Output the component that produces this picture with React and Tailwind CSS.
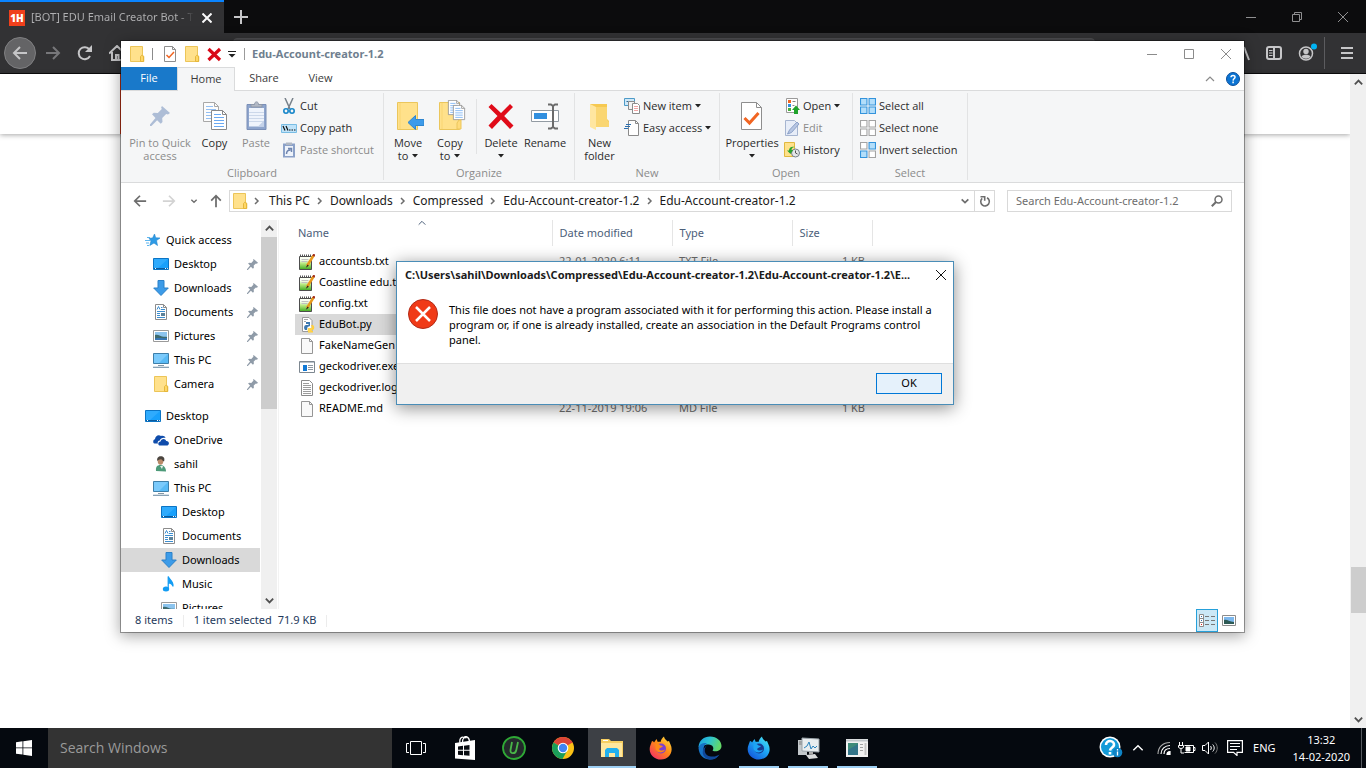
import React, { useState } from "react";
import clsx from "clsx";

/* ---------- small icons ---------- */

const Folder = ({ className = "h-4 w-4" }) => (
  <svg viewBox="0 0 16 16" className={className}>
    <path d="M1.500.5h12v9l1.300 .8v5.200H1.500z" fill="#ffe18c" stroke="#ecc558" />
    <path d="M11.500 15.500V10.500l1.200-1.200 1.800 1v5.200z" fill="#ffd766" stroke="#e5b73b" />
  </svg>
);

const Chevron = ({ dir = "down", className = "h-3 w-3", width = 2 }) => {
  const paths = {
    down: "M2 4l4 4 4-4",
    up: "M2 8l4-4 4 4",
    right: "M4 3l3 3-3 3",
  };
  return (
    <svg viewBox="0 0 12 12" className={className} fill="none" stroke="currentColor" strokeWidth={width}>
      <path d={paths[dir]} />
    </svg>
  );
};

const Caret = () => (
  <svg viewBox="0 0 6 4" className="inline-block h-1 w-[6px] shrink-0 align-middle" fill="#222">
    <path d="M0 0h6L3 3.500z" />
  </svg>
);

const Arrow = ({ className, dir = "left" }) => (
  <svg viewBox="0 0 16 16" className={className} fill="none" stroke="currentColor" strokeWidth="2">
    {dir === "left" && <path d="M15 8H2M8 2L2 8l6 6" />}
    {dir === "right" && <path d="M1 8h13M8 2l6 6-6 6" />}
    {dir === "up" && <path d="M8 15V2M2.500 7.500L8 2l5.500 5.500" />}
  </svg>
);

const Pin = ({ className = "h-3 w-3", fill = "#8f9ba8" }) => (
  <svg viewBox="0 0 20 20" className={className} fill={fill}>
    <path d="M12 0l8 7-2 1.500-1.800-.5-4 4 .3 4-1.700 1.800-3.700-3.500L1.500 20 0 20v-1.500L5.500 12 2 8.300 3.800 6.800l4 .3 4-4.200-.7-1.500z" />
  </svg>
);

const Monitor = () => (
  <svg viewBox="0 0 16 16" className="h-4 w-4">
    <path d="M0.500 2.500h15v11h-15z" fill="#18a0fb" stroke="#0b74c4" />
    <path d="M1 3h14L4 13H1z" fill="#45b6ff" opacity=".5" />
    <path d="M1 12.500h14" stroke="#0b5a9c" />
    <path d="M2 12.500h1M12 12.500h1M14 12.500h.8" stroke="#fff" />
  </svg>
);

const DownArrow = () => (
  <svg viewBox="0 0 16 16" className="h-4 w-4">
    <path d="M5 .5h6v7.500h4.300L8 15.500.7 8H5z" fill="#3c9be8" stroke="#2b80c8" />
  </svg>
);

const DocIcon = () => (
  <svg viewBox="0 0 16 16" className="h-4 w-4">
    <path d="M2.500.5h8l3 3v12h-11z" fill="#fff" stroke="#8c8c8c" />
    <path d="M10.500.5v3h3" fill="none" stroke="#8c8c8c" />
    <path d="M4 5.500l1.500-3 1.500 3M8 3.500h1.500M8 5.500h4M4 7.500h8M4 9.500h3M4 11.500h3M4 13.500h8" fill="none" stroke="#3c8ed0" />
    <path d="M8 9h4v3H8z" fill="#5d8299" />
  </svg>
);

const Picture = () => (
  <svg viewBox="0 0 16 16" className="h-4 w-4">
    <path d="M.5 2.500h15v11H.5z" fill="#fff" stroke="#9a9a9a" />
    <path d="M2 4h12v8H2z" fill="#8cc4ee" />
    <path d="M2 7c3-1 5 1 7 1.500 2 .5 4 .2 5 .5v3H2z" fill="#3d6a6d" />
    <path d="M2 10.500c4-1 8 0 12-.5v2H2z" fill="#3776b5" />
  </svg>
);

const ThisPC = () => (
  <svg viewBox="0 0 16 16" className="h-4 w-4">
    <path d="M.5 1.500h15v10H.5z" fill="#59baf5" stroke="#3e7fa9" />
    <path d="M1 2h14L6 11H1z" fill="#92d5ff" opacity=".6" />
    <path d="M5 13.500h6" stroke="#8497a4" />
    <path d="M0 15.300h16" stroke="#7b98ad" strokeWidth="1.200" />
  </svg>
);

const QuickStar = () => (
  <svg viewBox="0 0 16 16" className="h-4 w-4">
    <path d="M9.500 2l1.200 3.800 4.300.2-3.500 2.600 1 4.900-3.500-2.500L4.800 13.500l1.200-4.500L4 6.300l3.600-.3z" fill="#2e9be6" stroke="#2184cc" strokeWidth=".6" />
    <path d="M2 5.500h3M0 8.500h5M1 11h3M2 13.500h2" stroke="#5db5ee" />
  </svg>
);

const OneDrive = () => (
  <svg viewBox="0 0 16 16" className="h-4 w-4" fill="#0f4cab">
    <path d="M1.500 11.500C-.5 11 0 7.500 2 7.300 2 4 5.500 2 8 4c1.500-.7 4-.2 4.500 2-3-.7-5 .5-5.700 2.500C4.500 8.800 4.300 11 5 11.500z" />
    <path d="M6.500 13.500c-2-.6-1.500-3.800 1-4C8 6.300 12.500 6 13.200 9c2.800-.2 3.800 3.300 1.300 4.500z" />
  </svg>
);

const Person = () => (
  <svg viewBox="0 0 16 16" className="h-4 w-4">
    <path d="M3 15c-.5-4 1-6 4.500-6S13 12 13 15.500z" fill="#4d9a79" />
    <path d="M7 10l2 3 1-3z" fill="#e8f2ee" />
    <ellipse cx="7.500" cy="5" rx="2.800" ry="3.800" fill="#b98a69" />
    <path d="M4.300 5C3.500 1.500 6 0 8 .3c3 0 4 2.500 3 5.200C9.500 5 9 3.300 8 3.300 6 3.300 5.500 4 4.300 5z" fill="#4b4540" />
  </svg>
);

const Music = () => (
  <svg viewBox="0 0 16 16" className="h-4 w-4">
    <ellipse cx="5" cy="13" rx="3.200" ry="2.500" fill="#129cf3" />
    <path d="M7.200 13V.5C8 4 12.500 4.500 12 10.500 11.500 8 10 7 7.500 6.800" fill="#129cf3" stroke="#129cf3" strokeWidth="1.200" />
  </svg>
);

const Notepad = () => (
  <svg viewBox="0 0 16 16" className="h-4 w-4">
    <defs>
      <linearGradient id="note" x1="0" y1="0" x2="0" y2="1">
        <stop offset=".25" stopColor="#fafff2" />
        <stop offset=".55" stopColor="#b4e67c" />
        <stop offset="1" stopColor="#3fab1f" />
      </linearGradient>
    </defs>
    <path d="M.5 2.500h12v13h-12z" fill="url(#note)" stroke="#4d4d4d" />
    <path d="M1 1.500h12" stroke="#555" strokeDasharray="1 1" strokeWidth="2" />
    <path d="M2.500 5.500h7M2.500 7.500h6" stroke="#c2c2c2" />
    <path d="M14.500 1.500L8 12" stroke="#e8991c" strokeWidth="2.500" />
    <path d="M15.500.2l-1.200 2" stroke="#a32f1e" strokeWidth="2.500" />
    <path d="M8.500 10.500L6.800 13.800l3-2z" fill="#222" />
  </svg>
);

const BlankFile = () => (
  <svg viewBox="0 0 16 16" className="h-4 w-4">
    <path d="M2.500.5h8l3 3v12h-11z" fill="#f9f9f9" stroke="#969696" />
    <path d="M10.500.5v3h3" fill="none" stroke="#969696" />
  </svg>
);

const LogFile = () => (
  <svg viewBox="0 0 16 16" className="h-4 w-4">
    <path d="M2.500.5h8l3 3v12h-11z" fill="#fff" stroke="#8a8a8a" />
    <path d="M4 3.500h6M4 5.500h8M4 7.500h8M4 9.500h8M4 11.500h8M4 13.500h8" stroke="#9c9c9c" />
  </svg>
);

const Python = () => (
  <svg viewBox="0 0 16 16" className="h-4 w-4">
    <path d="M3.500.5h6.500l3 3v11h-9.500z" fill="#fff" stroke="#9a9a9a" />
    <path d="M5 2.500h4M5 4.500h2" stroke="#a8a8a8" />
    <path d="M7 5h4v4L8.500 10 8 13H6c-1.500-1.500-1-5 1-5h2.500V7H7z" fill="#3d78b0" />
    <path d="M12 8h2c2 1.500 1.500 5-.5 5H11v1h3v1.500h-5V12l4-1.500z" fill="#ffcf3e" />
    <path d="M9 11h4v3l-3 1.500-1.500-2z" fill="#ffd34d" />
  </svg>
);

const ExeFile = () => (
  <svg viewBox="0 0 16 16" className="h-4 w-4">
    <path d="M.5 2.500h15v11H.5z" fill="#fff" stroke="#7d8790" />
    <path d="M1 3.500h14" stroke="#b9c2ca" />
    <path d="M4 6h4v6H4z" fill="#1279d5" />
    <path d="M9 6.500h5M9 8.500h5M9 10.500h5" stroke="#8d98a2" />
  </svg>
);

/* ---------- ribbon icons ---------- */

const Page = ({ x = 0, y = 0 }) => (
  <g transform={`translate(${x} ${y})`}>
    <path d="M.5.5h11l4 4v15H.5z" fill="#fff" stroke="#888" />
    <path d="M11.500.5v4h4" fill="none" stroke="#888" />
    <path d="M3 4.500h7M3 7.500h10M3 10.500h10M3 13.500h10M3 16.500h10" stroke="#6aa9f2" />
  </g>
);

const CopyIcon = () => (
  <svg viewBox="0 0 32 32" className="h-8 w-8">
    <g opacity=".7"><Page x={4} y={2} /></g>
    <Page x={12} y={10} />
  </svg>
);

const PasteIcon = () => (
  <svg viewBox="0 0 32 32" className="h-8 w-8">
    <path d="M7 4.500h19v25H7z" fill="#8ea5cd" stroke="#7a8fb7" />
    <path d="M9 8h15v18.500H9z" fill="#eff4fc" />
    <path d="M9 12.500h15M9 15.500h15M9 18.500h15M9 21.500h15" stroke="#ccd8ea" />
    <path d="M18 26.500l6-6v6z" fill="#c4d2e9" />
    <path d="M11 7V4.500h3.500C14.500 1 18.500 1 18.500 4.500H22V7z" fill="#b1b8c4" stroke="#8e98a8" />
  </svg>
);

const MoveIcon = () => (
  <svg viewBox="0 0 32 32" className="h-8 w-8">
    <path d="M5.500 2.500h20v27h-20z" fill="#ffe18b" stroke="#ebc65c" />
    <path d="M8 3v26" stroke="#f9d572" />
    <path d="M16 22.500l7.500-7v4H32v6h-8.500v4z" fill="#3d9bea" stroke="#2f86cf" />
  </svg>
);

const CopyToIcon = () => (
  <svg viewBox="0 0 32 32" className="h-8 w-8">
    <path d="M5.500 2.500h20v27h-20z" fill="#ffe18b" stroke="#ebc65c" />
    <path d="M8 3v26" stroke="#f9d572" />
    <g transform="translate(14 0) scale(.75)"><Page /></g>
    <g transform="translate(19 5) scale(.75)"><Page /></g>
    <path d="M23 29v-6l2-3h2v9z" fill="#ffdb7a" stroke="#ebc65c" />
  </svg>
);

const RedX = ({ className }) => (
  <svg viewBox="0 0 32 32" className={className}>
    <path d="M6.500 4l9.500 9 9-9 3 3-8.800 9 9.300 9.500-3.500 3.500-9-9.500L7 29l-3.500-3.500 9-9.500L3.500 7z" fill="#e00b19" />
  </svg>
);

const SmallRedX = () => (
  <svg viewBox="0 0 16 16" className="h-4 w-4" stroke="#d90a18" strokeWidth="3.200">
    <path d="M2.500 3L14 14M14 3L2.500 14" />
  </svg>
);

const RenameIcon = () => (
  <svg viewBox="0 0 32 32" className="h-8 w-8">
    <path d="M2.500 10.500h27v11h-27z" fill="#fff" stroke="#929ba3" />
    <path d="M5 13h13v6H5z" fill="#318fdf" />
    <path d="M19 4.500h3l2 1.500 2-1.500h3M24 6v21M19 28.500h3l2-1.500 2 1.500h3" fill="none" stroke="#6b6b6b" strokeWidth="2" />
  </svg>
);

const NewFolderIcon = () => (
  <svg viewBox="0 0 32 32" className="h-8 w-8">
    <path d="M6 4h17v15l2 2v6H10z" fill="#f6c951" />
    <path d="M6 4l6 3v23l-6-3z" fill="#ffe6a0" />
    <path d="M12 7h11v13l2 2v5H12z" fill="#fad672" />
  </svg>
);

const PropertiesIcon = () => (
  <svg viewBox="0 0 32 32" className="h-8 w-8">
    <path d="M5.500 2.500h15l5 5v22h-20z" fill="#fff" stroke="#8e8e8e" />
    <path d="M20.500 2.500v5h5" fill="none" stroke="#8e8e8e" />
    <path d="M8.500 18l5 5 9-10" fill="none" stroke="#f16522" strokeWidth="3" />
  </svg>
);

const SmallProperties = () => (
  <svg viewBox="0 0 16 16" className="h-4 w-4" fill="none">
    <path d="M2.500.5h8l3 3v12h-11z" fill="#fff" stroke="#8e8e8e" />
    <path d="M10.500.5v3h3" stroke="#8e8e8e" />
    <path d="M4.500 9l2.500 2.500L12 6" stroke="#f16522" strokeWidth="1.500" />
  </svg>
);

const Scissors = () => (
  <svg viewBox="0 0 16 16" className="h-4 w-4" fill="none">
    <path d="M4 0l5 11M12 0L7 11" stroke="#77818a" strokeWidth="1.500" />
    <circle cx="5" cy="13" r="2.200" stroke="#1786c9" strokeWidth="1.600" />
    <circle cx="11" cy="13" r="2.200" stroke="#1786c9" strokeWidth="1.600" />
  </svg>
);

const CopyPathIcon = () => (
  <svg viewBox="0 0 16 16" className="h-4 w-4">
    <path d="M.5 4.500h15v8H.5z" fill="#bfe3f9" stroke="#79bde4" />
    <path d="M2 6l2 4.500M5 6l2 4.500" stroke="#111" strokeWidth="1.200" />
    <path d="M8 10h1.500M10.500 10H12M13 10h1.500" stroke="#111" strokeWidth="1.200" />
  </svg>
);

const PasteShortcutIcon = () => (
  <svg viewBox="0 0 16 16" className="h-4 w-4">
    <path d="M2 1.500h12v14H2z" fill="#8ba1c8" />
    <path d="M4 4h8v10H4z" fill="#eef3fb" />
    <path d="M5 .5h6V3H5z" fill="#b0b8c4" />
    <path d="M5.500 12c0-2.500 1-4 4-4M7 6.500h3.500v3.500" fill="none" stroke="#7086b0" strokeWidth="1.500" />
  </svg>
);

const NewItemIcon = () => (
  <svg viewBox="0 0 16 16" className="h-4 w-4">
    <path d="M.5.5h10v7H.5z" fill="#cfe8f8" stroke="#4d9bc8" />
    <path d="M2.500 3.500h6" stroke="#2d6b97" strokeDasharray="2 1" />
    <path d="M4.500 3.500h6v8h-6z" fill="#f3f3f3" stroke="#8c8c8c" />
    <path d="M8.500 5.500h5l2 2v8h-7z" fill="#fff" stroke="#8c8c8c" />
    <path d="M10 8.500h4M10 10.500h4M10 12.500h4" stroke="#f0a5a5" />
  </svg>
);

const EasyAccessIcon = () => (
  <svg viewBox="0 0 16 16" className="h-4 w-4">
    <path d="M4.500.5h7l3 3v12h-10z" fill="#fff" stroke="#8a8a8a" />
    <path d="M11.500.5v3h3" fill="none" stroke="#8a8a8a" />
    <path d="M2 4.500h5M1 6.500h5M0 8.500h4" stroke="#2d6fae" />
  </svg>
);

const OpenIcon = () => (
  <svg viewBox="0 0 16 16" className="h-4 w-4">
    <path d="M2.500.5h11v14h-11z" fill="#fff" stroke="#9a9a9a" />
    <path d="M4 2h3v3H4z" fill="#f16522" />
    <path d="M4 6h3v3H4z" fill="#318fdf" />
    <path d="M4 10h3v3H4z" fill="#4aaf3c" />
    <path d="M8.500 3.500h3M8.500 7.500h2" stroke="#888" />
    <path d="M10 16v-4H8l4-4.500 4 4.500h-2v4z" fill="#1fa32b" />
  </svg>
);

const EditIcon = () => (
  <svg viewBox="0 0 16 16" className="h-4 w-4">
    <path d="M1.500.5h9l3 3v12h-12z" fill="#e7edf8" stroke="#a6b5d0" />
    <path d="M3.500 14l2-4L13 2l2 2-7.500 8.500z" fill="#b7c6e2" stroke="#8ca1c8" />
  </svg>
);

const HistoryIcon = () => (
  <svg viewBox="0 0 16 16" className="h-4 w-4">
    <path d="M.5.5h10v14H.5z" fill="#ffe18b" stroke="#e0b840" />
    <circle cx="11.500" cy="11" r="4" fill="#e4e7e9" stroke="#76818a" />
    <path d="M11.500 8.500V11l2 1" fill="none" stroke="#555" />
    <path d="M3 8.500L6.500 12 9 8H7.500c0-1.800 1.500-3 3.500-3-3.500-1-6 .5-6 3.500z" fill="#2ba52e" />
  </svg>
);

const squares = ["M.5.5h6v6h-6z", "M8.500.5h6v6h-6z", "M.5 8.500h6v6h-6z", "M8.500 8.500h6v6h-6z"];

const SelectIcon = ({ on }) => (
  <svg viewBox="0 0 15 15" className="h-4 w-4">
    {squares.map((d, i) => (
      <path key={d} d={d} fill={on[i] ? "#b3defa" : "#fff"} stroke={on[i] ? "#3293dc" : "#a3a3a3"} />
    ))}
  </svg>
);

/* ---------- ribbon ---------- */

const BigButton = ({ icon, lines, className, disabled, caret }) => (
  <button
    disabled={disabled}
    className={clsx("flex shrink-0 flex-col items-center self-start pt-[7px] leading-[13px]", disabled ? "text-[#8b8b8b]" : "text-[#2b2b2b]", className)}
  >
    {icon}
    <span className="mt-1 whitespace-nowrap">{lines[0]}</span>
    {(lines[1] || caret) && (
      <span className="flex h-[13px] items-center gap-1 whitespace-nowrap">
        {lines[1]}
        {caret && <Caret />}
      </span>
    )}
  </button>
);

const SmallButton = ({ icon, children, disabled, caret }) => (
  <button disabled={disabled} className={clsx("flex h-[22px] items-center gap-[3px] whitespace-nowrap", disabled ? "text-[#8b8b8b]" : "text-[#2b2b2b]")}>
    {icon}
    {children}
    {caret && <Caret />}
  </button>
);

const Group = ({ label, className, children }) => (
  <section className={clsx("my-[2px] flex shrink-0 flex-col border-r border-[#e2e3e4]", className)}>
    <div className="flex h-[72px] shrink-0">{children}</div>
    <p className="text-center leading-4 text-[#8b8b8b]">{label}</p>
  </section>
);

const Ribbon = () => (
  <div className="flex h-[93px] shrink-0 overflow-hidden border-y border-[#dadbdc] bg-[#f5f6f7]">
    <Group label="Clipboard" className="w-[263px]">
      <BigButton className="w-[78px]" disabled lines={["Pin to Quick", "access"]} icon={<span className="flex h-8 w-8 items-center justify-center"><Pin className="h-5 w-5" fill="#adbdd6" /></span>} />
      <BigButton className="w-[31px]" lines={["Copy"]} icon={<CopyIcon />} />
      <BigButton className="w-[52px]" disabled lines={["Paste"]} icon={<PasteIcon />} />
      <div className="-ml-px flex flex-col pt-[2px]">
        <SmallButton icon={<Scissors />}>Cut</SmallButton>
        <SmallButton icon={<CopyPathIcon />}>Copy path</SmallButton>
        <SmallButton icon={<PasteShortcutIcon />} disabled>Paste shortcut</SmallButton>
      </div>
    </Group>
    <Group label="Organize" className="w-[191px]">
      <BigButton className="w-12" lines={["Move", "to"]} caret icon={<MoveIcon />} />
      <BigButton className="w-9" lines={["Copy", "to"]} caret icon={<CopyToIcon />} />
      <div className="ml-2 mt-[6px] h-[55px] w-px bg-[#e2e3e4]" />
      <BigButton className="w-12" lines={["Delete"]} caret icon={<RedX className="h-8 w-8" />} />
      <BigButton className="w-10" lines={["Rename"]} icon={<RenameIcon />} />
    </Group>
    <Group label="New" className="w-[145px]">
      <BigButton className="w-[49px]" lines={["New", "folder"]} icon={<NewFolderIcon />} />
      <div className="flex flex-col pt-[2px]">
        <SmallButton icon={<NewItemIcon />} caret>New item</SmallButton>
        <SmallButton icon={<EasyAccessIcon />} caret>Easy access</SmallButton>
      </div>
    </Group>
    <Group label="Open" className="w-[133px]">
      <BigButton className="w-16" lines={["Properties"]} caret icon={<PropertiesIcon />} />
      <div className="flex flex-col pt-[2px]">
        <SmallButton icon={<OpenIcon />} caret>Open</SmallButton>
        <SmallButton icon={<EditIcon />} disabled>Edit</SmallButton>
        <SmallButton icon={<HistoryIcon />}>History</SmallButton>
      </div>
    </Group>
    <Group label="Select" className="w-[115px]">
      <div className="flex flex-col pl-[7px] pt-[2px]">
        <SmallButton icon={<SelectIcon on={[1, 1, 1, 1]} />}>Select all</SmallButton>
        <SmallButton icon={<SelectIcon on={[0, 0, 0, 0]} />}>Select none</SmallButton>
        <SmallButton icon={<SelectIcon on={[0, 1, 1, 0]} />}>Invert selection</SmallButton>
      </div>
    </Group>
  </div>
);

/* ---------- explorer ---------- */

const quickAccess = [
  { name: "Desktop", icon: <Monitor /> },
  { name: "Downloads", icon: <DownArrow /> },
  { name: "Documents", icon: <DocIcon /> },
  { name: "Pictures", icon: <Picture /> },
  { name: "This PC", icon: <ThisPC /> },
  { name: "Camera", icon: <Folder /> },
];

const tree = [
  { name: "Desktop", icon: <Monitor />, pad: "pl-6" },
  { name: "OneDrive", icon: <OneDrive />, pad: "pl-8" },
  { name: "sahil", icon: <Person />, pad: "pl-8" },
  { name: "This PC", icon: <ThisPC />, pad: "pl-8" },
  { name: "Desktop", icon: <Monitor />, pad: "pl-10" },
  { name: "Documents", icon: <DocIcon />, pad: "pl-10" },
  { name: "Downloads", icon: <DownArrow />, pad: "pl-10", selected: true },
  { name: "Music", icon: <Music />, pad: "pl-10" },
  { name: "Pictures", icon: <Picture />, pad: "pl-10" },
];

const files = [
  { name: "accountsb.txt", icon: <Notepad />, date: "22-01-2020 6:11", type: "TXT File", size: "1 KB" },
  { name: "Coastline edu.txt", icon: <Notepad /> },
  { name: "config.txt", icon: <Notepad /> },
  { name: "EduBot.py", icon: <Python /> },
  { name: "FakeNameGen", icon: <BlankFile /> },
  { name: "geckodriver.exe", icon: <ExeFile /> },
  { name: "geckodriver.log", icon: <LogFile /> },
  { name: "README.md", icon: <BlankFile />, date: "22-11-2019 19:06", type: "MD File", size: "1 KB" },
];

const crumbs = ["This PC", "Downloads", "Compressed", "Edu-Account-creator-1.2", "Edu-Account-creator-1.2"];

const TreeItem = ({ item, pad, pinned }) => (
  <button className={clsx("flex h-6 w-full shrink-0 items-center gap-[5px] pr-[2px] text-left text-black", pad, item.selected && "bg-[#d9d9d9]")}>
    {item.icon}
    <span className="flex-1">{item.name}</span>
    {pinned && <Pin className="h-[11px] w-[11px]" />}
  </button>
);

const Explorer = () => {
  const [selected, setSelected] = useState("EduBot.py");

  return (
    <section className="absolute top-10 right-[121px] bottom-[95px] left-[120px] flex flex-col border border-black/35 bg-white bg-clip-padding shadow-[0_3px_14px_rgba(0,0,0,0.35)]">
      {/* Title bar */}
      <header className="flex h-[26px] shrink-0 items-center pl-2">
        <Folder />
        <span className="mx-[7px] h-3 w-px bg-[#8b8b8b]" />
        <button aria-label="Properties" className="ml-[2px]"><SmallProperties /></button>
        <button aria-label="New folder" className="ml-[6px]"><Folder /></button>
        <button aria-label="Delete" className="ml-[6px]"><SmallRedX /></button>
        <button aria-label="Customize toolbar" className="ml-[6px]">
          <svg viewBox="0 0 8 8" className="h-2 w-2"><path d="M0 1.500h8" stroke="#222" /><path d="M0.500 4h7L4 7.500z" fill="#222" /></svg>
        </button>
        <span className="mr-[7px] ml-2 h-3 w-px bg-[#9b9b9b]" />
        <h1 className="font-['Noto_Sans','Open_Sans',sans-serif] font-bold text-[#6f7f8f]">Edu-Account-creator-1.2</h1>
        <div className="ml-auto flex items-center gap-[27px] pr-[13px] text-[#8b8b8b]">
          <button aria-label="Minimize"><svg viewBox="0 0 10 10" className="h-[10px] w-[10px]" stroke="currentColor"><path d="M0 5.500h10" /></svg></button>
          <button aria-label="Maximize"><svg viewBox="0 0 10 10" className="h-[10px] w-[10px]" stroke="currentColor" fill="none"><path d="M.5.5h9v9h-9z" /></svg></button>
          <button aria-label="Close"><svg viewBox="0 0 10 10" className="h-[10px] w-[10px]" stroke="currentColor"><path d="M0 0l10 10M10 0L0 10" /></svg></button>
        </div>
      </header>

      {/* Tabs */}
      <nav className="flex h-[23px] shrink-0 text-[#3b3b3b]">
        <button className="w-14 bg-[#1979ca] text-white">File</button>
        <button className="z-10 -mb-px w-[58px] border border-b-0 border-[#dadbdc] bg-[#f5f6f7]">Home</button>
        <button className="w-[58px]">Share</button>
        <button className="w-[55px]">View</button>
        <div className="ml-auto flex items-center gap-[10px] pr-1">
          <button aria-label="Collapse ribbon" className="text-[#8b8b8b]"><Chevron dir="up" width={1.200} /></button>
          <button aria-label="Help">
            <svg viewBox="0 0 14 14" className="h-[14px] w-[14px]">
              <circle cx="7" cy="7" r="6.500" fill="#0b74d3" stroke="#0b4f9c" />
              <path d="M5 5.300C5 2.800 9.200 2.800 9 5.200 9 6.500 7.200 6.700 7.100 8.600M7.100 9.500v1.700" fill="none" stroke="#fff" strokeWidth="1.500" />
            </svg>
          </button>
        </div>
      </nav>

      <Ribbon />

      <div className="flex min-h-0 flex-1 flex-col font-['Noto_Sans','Open_Sans',sans-serif]">
        {/* Address row */}
        <div className="flex h-9 shrink-0 items-center px-3 text-[#6d6d6d]">
          <button aria-label="Back"><Arrow className="h-[14px] w-[14px]" /></button>
          <button aria-label="Forward" className="ml-[15px] text-[#d3d3d3]"><Arrow dir="right" className="h-[14px] w-[14px]" /></button>
          <button aria-label="Recent" className="ml-[14px]"><Chevron className="h-2 w-2" /></button>
          <button aria-label="Up" className="mr-[6px] ml-[11px]"><Arrow dir="up" className="h-[14px] w-[14px]" /></button>
          <div className="flex h-[22px] flex-1 items-center border border-[#d9d9d9] pl-[2px]">
            <Folder />
            {crumbs.map((crumb, i) => (
              <React.Fragment key={i}>
                <Chevron dir="right" className={clsx("h-3 w-3", i === 0 ? "mr-[6px] ml-[3px]" : "mx-1")} width={1.500} />
                <button className="text-xs whitespace-nowrap text-[#1b1b1b]">{crumb}</button>
              </React.Fragment>
            ))}
            <button aria-label="Previous locations" className="mr-1 ml-auto"><Chevron className="h-[10px] w-[10px]" /></button>
            <button aria-label="Refresh" className="flex h-full w-5 items-center justify-center border-l border-[#d9d9d9]">
              <svg viewBox="0 0 12 12" className="h-3 w-3" fill="none" stroke="currentColor" strokeWidth="1.600">
                <path d="M8 2.800a4.300 4.300 0 1 1-4.800.6M1.500 1.800h4.200v4" />
              </svg>
            </button>
          </div>
          <label className="ml-3 flex h-[22px] w-[225px] items-center border border-[#d9d9d9] pr-2 pl-2">
            <input aria-label="Search folder" placeholder="Search Edu-Account-creator-1.2" className="min-w-0 flex-1 outline-none placeholder:text-[#6d6d6d]" />
            <svg viewBox="0 0 12 12" className="h-3 w-3" fill="none" stroke="currentColor" strokeWidth="1.500"><circle cx="7.500" cy="4.500" r="3.500" /><path d="M5 7L.8 11.200" strokeWidth="2" /></svg>
          </label>
        </div>

        {/* Body */}
        <div className="mt-px flex min-h-0 flex-1">
          <aside className="flex w-[139px] shrink-0 flex-col overflow-hidden pt-2">
            <TreeItem item={{ name: "Quick access", icon: <QuickStar /> }} pad="pl-6" />
            {quickAccess.map((item) => (
              <TreeItem key={item.name} item={item} pad="pl-8" pinned />
            ))}
            <div className="h-2 shrink-0" />
            {tree.map((item, i) => (
              <TreeItem key={i} item={item} pad={item.pad} />
            ))}
          </aside>
          <div className="ml-px flex w-4 shrink-0 flex-col items-center bg-[#f0f0f0] text-[#505050]">
            <Chevron dir="up" className="my-[3px] h-[11px] w-[11px]" />
            <div className="h-[172px] w-full bg-[#cdcdcd]" />
            <Chevron className="mt-auto mb-[3px] h-[11px] w-[11px]" />
          </div>
          <div className="ml-px flex-1 border-l border-[#f3f3f3] pl-4">
            <table className="w-[577px] table-fixed border-collapse text-left">
              <colgroup>
                <col className="w-[257px]" />
                <col className="w-[120px]" />
                <col className="w-[120px]" />
                <col className="w-[80px]" />
              </colgroup>
              <thead>
                <tr className="h-[26px] text-[#4c607a]">
                  <th className="relative border-r border-[#e5e5e5] pl-[3px] font-normal">
                    Name
                    <Chevron dir="up" width={1.200} className="absolute top-[-2px] left-[122px] h-[10px] w-[10px]" />
                  </th>
                  <th className="border-r border-[#e5e5e5] pl-[7px] font-normal">Date modified</th>
                  <th className="border-r border-[#e5e5e5] pl-[7px] font-normal">Type</th>
                  <th className="border-r border-[#e5e5e5] pl-[7px] font-normal">Size</th>
                </tr>
              </thead>
              <tbody className="text-[#6d6d6d]">
                <tr className="h-[5px]" />
                {files.map((file) => (
                  <tr key={file.name} onClick={() => setSelected(file.name)} className={clsx("h-[21px]", selected === file.name && "bg-[#d9d9d9]")}>
                    <td className="p-0 pl-1">
                      <div className="flex items-center gap-1 text-black">
                        {file.icon}
                        {file.name}
                      </div>
                    </td>
                    <td className="p-0 pl-[7px]">{file.date}</td>
                    <td className="p-0 pl-[7px]">{file.type}</td>
                    <td className="p-0 pr-[7px] text-right">{file.size}</td>
                  </tr>
                ))}
              </tbody>
            </table>
          </div>
        </div>

        {/* Status bar */}
        <footer className="flex h-[23px] shrink-0 items-center pl-[14px] text-[#1e395b]">
          <span>8 items</span>
          <span className="mx-[10px] h-3 w-px bg-[#ececec]" />
          <span>1 item selected</span>
          <span className="ml-[6px]">71.9 KB</span>
          <span className="ml-[10px] h-3 w-px bg-[#ececec]" />
          <button aria-label="Details view" className="ml-auto flex h-full w-[22px] items-center justify-center border border-[#26a0da] bg-[#cbe8f6]">
            <svg viewBox="0 0 16 13" className="h-[13px] w-4" fill="none">
              <path d="M.5.5h4v12h-4zM.5 4.500h4M.5 8.500h4" fill="#fff" stroke="#8c8c8c" />
              <path d="M6 2.500h4M12 2.500h4M6 6.500h4M12 6.500h4M6 10.500h4M12 10.500h4" stroke="#777" />
              <path d="M2 2.500h1M2 6.500h1" stroke="#2d6fae" />
              <path d="M2 10.500h1" stroke="#d22" />
            </svg>
          </button>
          <button aria-label="Thumbnail view" className="mr-2 ml-1">
            <svg viewBox="0 0 14 11" className="h-[11px] w-[14px]">
              <path d="M.5.5h13v10H.5z" fill="#fff" stroke="#8c8c8c" />
              <path d="M2 2h10v7H2z" fill="#7db8ee" />
              <path d="M2 5c3-1 5 2 10 2v2H2z" fill="#2d5a55" />
            </svg>
          </button>
        </footer>
      </div>
    </section>
  );
};

/* ---------- error dialog ---------- */

const ErrorDialog = () => (
  <div role="alertdialog" className="absolute top-[261px] left-[396px] z-20 w-[558px] border border-[#4a8db7] bg-white font-['Noto_Sans','Open_Sans',sans-serif] text-black shadow-[0_3px_16px_rgba(0,0,0,0.45)]">
    <div className="flex h-[26px] items-center pr-[7px] pl-2">
      <h2 className="flex-1 whitespace-nowrap font-bold text-[#1b1b1b]">C:\Users\sahil\Downloads\Compressed\Edu-Account-creator-1.2\Edu-Account-creator-1.2\E...</h2>
      <button aria-label="Close"><svg viewBox="0 0 10 10" className="h-[10px] w-[10px]" stroke="#111"><path d="M0 0l10 10M10 0L0 10" /></svg></button>
    </div>
    <div className="flex h-[75px] gap-[10px] pt-[10px] pr-2 pl-[10px]">
      <svg viewBox="0 0 32 32" className="h-8 w-8 shrink-0">
        <circle cx="16" cy="16" r="14.500" fill="#f03a17" stroke="#b32b17" />
        <path d="M9 9l14 14M23 9L9 23" stroke="#fff" strokeWidth="2.500" />
      </svg>
      <p className="pt-1 leading-[15px]">
        This file does not have a program associated with it for performing this action. Please install a program or, if one is already installed, create an association in the Default Programs control panel.
      </p>
    </div>
    <div className="flex h-[41px] items-center justify-end border-t border-[#dfdfdf] bg-[#f0f0f0] pr-[11px] pb-[2px]">
      <button className="h-[21px] w-[66px] border border-[#0078d7] bg-[#e5f1fb]">OK</button>
    </div>
  </div>
);

/* ---------- browser ---------- */

const Browser = () => (
  <section className="flex flex-1 flex-col bg-white">
    <header className="flex h-[33px] shrink-0 items-stretch bg-[#0c0c0d]">
      <div className="flex w-56 items-center border-t-2 border-[#0a84ff] bg-[#323234] pr-3 pl-[9px] text-[#b1b1b3]">
        <svg viewBox="0 0 16 16" className="h-4 w-4 shrink-0">
          <path d="M0 0h16v16H0z" fill="#f0401c" />
          <text x="8" y="12" textAnchor="middle" fontFamily="Open Sans, sans-serif" fontSize="10" fontWeight="800" fill="#fff">1H</text>
        </svg>
        <span className="ml-[6px] flex-1 bg-linear-to-r from-[#b1b1b3] from-90% to-[#323234] bg-clip-text font-['Noto_Sans','Open_Sans',sans-serif] whitespace-nowrap text-transparent">[BOT] EDU Email Creator Bot - T</span>
        <button aria-label="Close tab" className="ml-2 text-[#f9f9fa]">
          <svg viewBox="0 0 10 10" className="h-[10px] w-[10px]" stroke="currentColor" strokeWidth="2"><path d="M.5.5l9 9M9.500.5l-9 9" /></svg>
        </button>
      </div>
      <button aria-label="New tab" className="ml-[10px] text-[#c6c6c8]">
        <svg viewBox="0 0 14 14" className="h-[14px] w-[14px]" stroke="currentColor" strokeWidth="2"><path d="M7 0v14M0 7h14" /></svg>
      </button>
      <div className="ml-auto flex items-center gap-9 pr-[18px] text-[#8f8f90]">
        <button aria-label="Minimize"><svg viewBox="0 0 10 10" className="h-[10px] w-[10px]" stroke="currentColor"><path d="M0 5.500h10" /></svg></button>
        <button aria-label="Restore"><svg viewBox="0 0 10 10" className="h-[10px] w-[10px]" stroke="currentColor" fill="none"><path d="M.5 2.500h7v7h-7zM2.500 2.500v-2h7v7h-2" /></svg></button>
        <button aria-label="Close"><svg viewBox="0 0 10 10" className="h-[10px] w-[10px]" stroke="currentColor"><path d="M0 0l10 10M10 0L0 10" /></svg></button>
      </div>
    </header>

    <div className="flex h-[41px] shrink-0 items-center border-b border-[#0c0c0d] bg-[#323234] px-1 text-[#c6c6c8]">
      <button aria-label="Back" className="flex h-8 w-8 items-center justify-center rounded-full border border-[#808082] bg-[#646466]"><Arrow className="h-4 w-4" /></button>
      <button aria-label="Forward" className="ml-[9px] text-[#77777a]"><Arrow dir="right" className="h-4 w-4" /></button>
      <button aria-label="Reload" className="ml-4">
        <svg viewBox="0 0 16 16" className="h-4 w-4" fill="none" stroke="currentColor" strokeWidth="2"><path d="M13 11A6 6 0 1 1 12.500 4.500" /><path d="M15 0v7H8z" fill="currentColor" stroke="none" /></svg>
      </button>
      <button aria-label="Home" className="ml-4">
        <svg viewBox="0 0 16 16" className="h-4 w-4" fill="none" stroke="currentColor" strokeWidth="2"><path d="M0 8.500L8 1l8 7.500M3 7v8h10V7M7 15v-5h2.500v5" /></svg>
      </button>
      <div className="ml-[108px] h-[31px] w-[862px] rounded-sm border border-[#4d4d50] bg-[#474749]" />
      <div className="ml-auto flex items-center gap-4 pr-[9px]">
        <svg viewBox="0 0 16 16" className="h-4 w-4" stroke="currentColor" strokeWidth="2" fill="none"><path d="M1 1v14M5 1v14M10 2l5 13" /></svg>
        <button aria-label="Sidebar">
          <svg viewBox="0 0 16 14" className="h-[14px] w-4" fill="none" stroke="currentColor" strokeWidth="2"><rect x="1" y="1" width="14" height="12" rx="2" /><path d="M8 1v12" /><path d="M3 4.500h3.500M3 7h3.500M3 9.500h3.500" strokeWidth="1" /></svg>
        </button>
        <button aria-label="Account">
          <svg viewBox="0 0 18 18" className="h-[18px] w-[18px] overflow-visible" fill="none">
            <circle cx="8" cy="9.500" r="6.500" stroke="currentColor" strokeWidth="1.500" />
            <circle cx="8" cy="7.500" r="2.700" fill="currentColor" />
            <path d="M3.500 12.500c1-2.500 8-2.500 9 0-2 3-7 3-9 0z" fill="currentColor" />
            <circle cx="16" cy="2.500" r="3" fill="#00b3f4" />
          </svg>
        </button>
        <span className="-ml-2 h-8 w-px bg-[#5c5c5f]" />
        <button aria-label="Menu">
          <svg viewBox="0 0 12 12" className="h-3 w-3" stroke="currentColor" strokeWidth="2"><path d="M0 1h12M0 6h12M0 11h12" /></svg>
        </button>
      </div>
    </div>

    <div className="flex flex-1">
      <main className="flex-1">
        <div className="h-[60px] bg-white pl-[120px] shadow-[0_1px_5px_rgba(0,0,0,0.35)]">
          <div className="h-full w-[60px] bg-[#f0401c]" />
        </div>
      </main>
      <div className="relative flex w-4 flex-col items-center bg-[#f0f0f0] text-[#505050]">
        <Chevron dir="up" className="mt-[3px] h-[11px] w-[11px]" />
        <div className="mt-auto mb-[101px] h-[46px] w-[15px] bg-[#cdcdcd]" />
        <Chevron className="mb-[3px] h-[11px] w-[11px]" />
      </div>
    </div>
  </section>
);

/* ---------- taskbar ---------- */

const FoxIcon = ({ outer, mid, inner, id }) => (
  <svg viewBox="0 0 24 24" className="h-6 w-6">
    <defs>
      <linearGradient id={id} x1="1" y1="0" x2=".2" y2="1">
        <stop offset="0" stopColor={outer} />
        <stop offset=".5" stopColor={mid[0]} />
        <stop offset="1" stopColor={mid[1]} />
      </linearGradient>
    </defs>
    <path d="M3 5c1 .2 1.700.8 2 1.500L7.500 3l1.300 3c1-.2 2-.2 2.700 0C12 3.500 13.500 1.500 15 .5c.2 2 2 3.500 3.500 5l1.500-.5 1.500 3.500c3.500 7-1.500 15-9.500 15S-1.500 16.500 1.500 9z" fill={`url(#${id})`} />
    <circle cx="12" cy="12.500" r="5" fill={inner} />
    <path d="M6.500 8c2-.5 4 0 5 1.500l2.500.5c-1 1.700-3 1.500-4 3 1 2 4 2 6 .5-1 4-9 4.500-9.500-1z" fill={mid[0]} />
  </svg>
);

const apps = [
  {
    name: "Task View",
    icon: <svg viewBox="0 0 20 16" className="h-4 w-5" fill="none" stroke="#fff"><path d="M4.500 1.500h11v13h-11zM3 3.500H.5v9H3M17 3.500h2.500v9H17" /></svg>,
  },
  {
    name: "Store",
    icon: (
      <svg viewBox="0 0 24 24" className="h-6 w-6">
        <path d="M7 7C6 2 9 .5 11 1.500c1-1.500 5-1.500 5.500 4M9.500 6c0-4 2-5 4-4" fill="none" stroke="#fff" strokeWidth="1.300" />
        <path d="M2 7l20-3v20l-20-1.500z" fill="#fff" />
        <path d="M5 10.500l5-.7v4H5zM11 9.700l5.500-.7v4.800H11zM5 14.800h5v4.400l-5-.5zM11 14.800h5.500v5L11 19.300z" fill="#0a0d12" />
      </svg>
    ),
  },
  {
    name: "IObit Uninstaller",
    icon: (
      <svg viewBox="0 0 24 24" className="h-6 w-6" fill="none">
        <circle cx="12" cy="12" r="11" fill="#23292b" stroke="#2fa936" strokeWidth="1.800" />
        <path d="M10 6l-1.500 8c-.7 4 5 4.500 5.800 0L16 6" stroke="#49b548" strokeWidth="1.800" />
      </svg>
    ),
  },
  {
    name: "Chrome",
    icon: (
      <svg viewBox="0 0 24 24" className="h-6 w-6">
        <circle cx="12" cy="12" r="11" fill="#fbc116" />
        <path d="M12 12L2.500 6.500A11 11 0 0 1 21.500 6.500z" fill="#dc4437" />
        <path d="M2.500 6.500A11 11 0 0 0 11.500 23l4.500-8-4-3z" fill="#1b9e59" />
        <path d="M12 7h9.800l-1-2H12z" fill="#dc4437" />
        <circle cx="12" cy="12" r="5.300" fill="#fff" />
        <circle cx="12" cy="12" r="4.200" fill="#4285f4" />
      </svg>
    ),
  },
  {
    name: "File Explorer",
    active: true,
    icon: (
      <svg viewBox="0 0 24 24" className="h-6 w-6">
        <path d="M1 3h8l2 2h12v16H1z" fill="#f7cf62" />
        <path d="M1 7h21v14H1z" fill="#ffe79e" />
        <path d="M5 21v-7l2-2h10l2 2v7h-4v-4H9v4z" fill="#22b0ee" />
        <path d="M3 4.500h5" stroke="#fff" />
      </svg>
    ),
  },
  { name: "Firefox", icon: <FoxIcon id="fox" outer="#ffe847" mid={["#ff8a16", "#f52f65"]} inner="#7b3fd0" /> },
  {
    name: "Edge",
    icon: (
      <svg viewBox="0 0 24 24" className="h-6 w-6">
        <defs>
          <linearGradient id="edge" x1="0" y1="0" x2="1" y2=".3">
            <stop offset="0" stopColor="#1b9de2" />
            <stop offset=".5" stopColor="#2cc3d2" />
            <stop offset="1" stopColor="#62d86a" />
          </linearGradient>
        </defs>
        <path d="M.5 11C1 4.500 6 .5 12 .5c7 0 11.500 4.500 11.500 9.500 0 5-6 6.500-9 4.500 2-2 .5-6-4-6-5 0-9.500 3-10 2.500z" fill="url(#edge)" />
        <path d="M.5 12C1 8.500 4.500 6.500 9 7c-5 3-4.500 11 1 14 4 2 8 1 11.500-2.500C17 26 1.500 26 .5 12z" fill="#1673c6" />
        <path d="M9.500 9C5 12 6 20 13 20.500c4 .5 7-1 8.500-2-2 3-5 5-8.500 5-8 0-12-9-3.500-14.500z" fill="#10489a" />
      </svg>
    ),
  },
  { name: "Firefox Developer Edition", running: true, icon: <FoxIcon id="foxdev" outer="#52f0f0" mid={["#1da4f5", "#1455d8"]} inner="#17398d" /> },
  {
    name: "Resource Monitor",
    running: true,
    icon: (
      <svg viewBox="0 0 24 24" className="h-6 w-6">
        <path d="M2 4h9v15H2z" fill="#c3c8cb" />
        <path d="M3 6h5M3 8h5" stroke="#777" />
        <path d="M6 2l17 1v13l-17-1z" fill="#e9edef" stroke="#9aa3a9" />
        <path d="M8 12l3-2 2-4 2 7 2-3 2 2 2-2" fill="none" stroke="#2b83bd" />
        <path d="M10 19l9-1 3 4-9 1z" fill="#d8dadb" />
        <path d="M13 16h4v2.500h-4z" fill="#aaa" />
      </svg>
    ),
  },
  {
    name: "Installer",
    running: true,
    icon: (
      <svg viewBox="0 0 24 24" className="h-6 w-6">
        <path d="M1 3h22v18H1z" fill="#f1f1f1" />
        <path d="M1 4.500h22" stroke="#c0c6ca" strokeWidth="2" />
        <path d="M3 7h10v12H3z" fill="#3f8b79" />
        <path d="M3 14l10-6v11H3z" fill="#337589" />
        <path d="M15 8.500h3M15 11.500h3M15 14.500h3" stroke="#a3a3a3" />
        <path d="M20.500 7v12" stroke="#c4c4c4" strokeWidth="2" />
      </svg>
    ),
  },
];

const Taskbar = () => (
  <footer className="flex h-10 shrink-0 bg-[#05090f] text-white">
    <button aria-label="Start" className="flex w-12 items-center justify-center">
      <svg viewBox="0 0 16 16" className="h-4 w-4" fill="#fff"><path d="M0 2.200l6.500-.9v6.200H0zM7.300 1.200L16 0v7.500H7.300zM0 8.300h6.500v6.300L0 13.700zM7.300 8.300H16V16l-8.700-1.300z" /></svg>
    </button>
    <input aria-label="Search Windows" placeholder="Search Windows" className="w-[344px] bg-[#333] px-3 text-sm outline-none placeholder:text-[#9a9a9a]" />
    <div className="flex gap-px">
      {apps.map((app) => (
        <button
          key={app.name}
          aria-label={app.name}
          className={clsx("flex w-12 flex-col items-center", app.active && "bg-[#3d4045]")}
        >
          <span className="flex h-[38px] items-center pt-[2px]">{app.icon}</span>
          {app.active && <span className="h-[2px] w-full bg-[#9dcff3]" />}
          {app.running && <span className="h-[2px] w-10 bg-[#9dcff3]" />}
        </button>
      ))}
    </div>
    <div className="ml-auto flex items-center font-['Noto_Sans','Open_Sans',sans-serif]">
      <button aria-label="Get help">
        <svg viewBox="0 0 24 24" className="h-6 w-6">
          <circle cx="11" cy="11" r="10.500" fill="#fff" />
          <circle cx="11" cy="11" r="9" fill="#149bd8" />
          <path d="M7 9c0-5.500 8.500-5 8 0-.3 2.500-3.700 2.500-4 5.500M11 16v2.500" fill="none" stroke="#fff" strokeWidth="2.600" />
          <circle cx="18.500" cy="16.500" r="4.800" fill="#0e83c5" />
          <path d="M18.500 13v1.500M18.500 15.500v4" stroke="#fff" strokeWidth="1.300" />
        </svg>
      </button>
      <button aria-label="Show hidden icons" className="ml-2"><Chevron dir="up" width={1.200} className="h-[14px] w-[14px]" /></button>
      <svg viewBox="0 0 14 14" className="ml-3 h-[14px] w-[14px]" fill="none" stroke="#fff" strokeWidth="1.200">
        <path d="M1 13C1 6 6 1.500 13 1.500" stroke="#aaa" />
        <path d="M4 13c0-5 4-8.500 9-8.500M7 13c0-3.500 2.500-5.500 6-5.500" />
        <path d="M13 10.500c-2 0-3 1-3 3h3z" fill="#fff" />
      </svg>
      <svg viewBox="0 0 18 12" className="ml-[7px] h-3 w-[18px]" fill="none" stroke="#fff">
        <path d="M6.500 3.500h9v7h-9M15.500 5.500h1.500v3h-1.500" />
        <path d="M8 5h4v4H8z" fill="#fff" />
        <path d="M1.500 0v3M4.500 0v3M.5 3.500h5V5c0 2-5 2-5 0zM3 7v4h3" />
      </svg>
      <svg viewBox="0 0 17 14" className="ml-[6px] h-[14px] w-[17px]" fill="none" stroke="#fff">
        <path d="M.5 4.500H3L6.500 1v12L3 9.500H.5z" />
        <path d="M8.500 5c1 1 1 3 0 4M10.700 3.500c2 2 2 5 0 7" />
        <path d="M13 1.500c3 3 3 8 0 11" stroke="#777" />
      </svg>
      <svg viewBox="0 0 16 16" className="ml-2 h-4 w-4" fill="none" stroke="#fff" strokeWidth="1.200">
        <path d="M.6.6h14.800v11.800H10V15.500L6.500 12.400H.6z" />
        <path d="M3 3.500h10M3 6.500h10M3 9.500h7" />
      </svg>
      <button className="ml-[10px]">ENG</button>
      <div className="ml-[17px] text-center leading-[17px]">
        <p>13:32</p>
        <p>14-02-2020</p>
      </div>
      <span className="mr-1 ml-[11px] h-10 w-px bg-[#55595f]" />
    </div>
  </footer>
);

const App = () => (
  <div className="flex min-h-screen flex-col overflow-hidden font-['Open_Sans','Noto_Sans',sans-serif] text-[11px]">
    <div className="relative flex flex-1 flex-col">
      <Browser />
      <Explorer />
      <ErrorDialog />
    </div>
    <Taskbar />
  </div>
);

export default App;
